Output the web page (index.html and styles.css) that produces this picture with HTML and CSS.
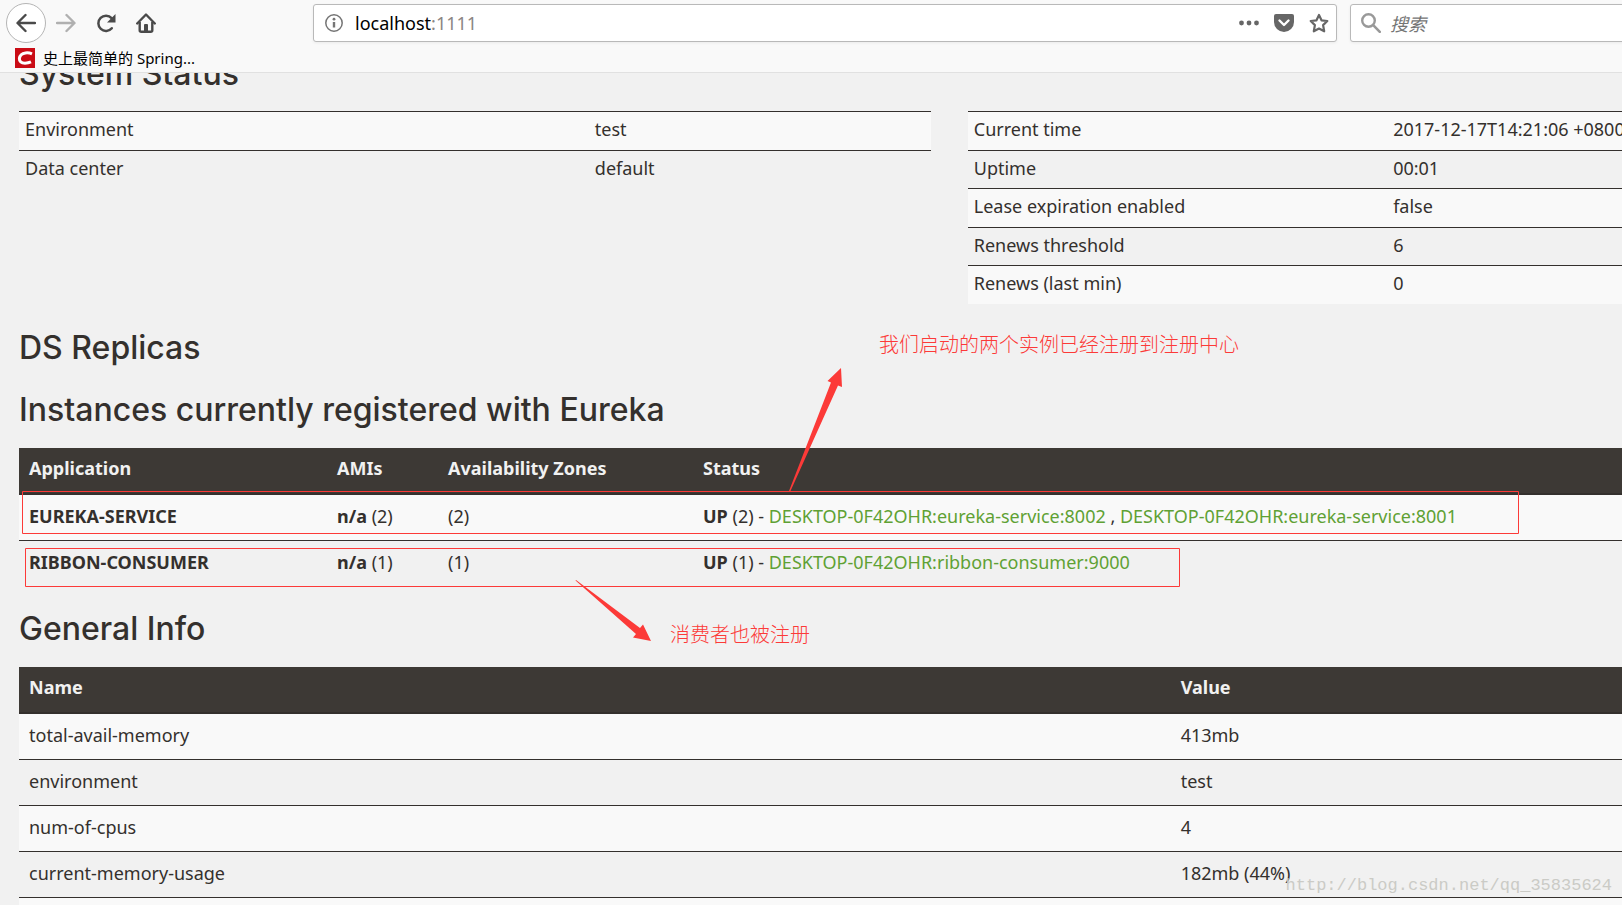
FILE: index.html
```html
<!DOCTYPE html>
<html lang="zh-CN">
<head>
<meta charset="utf-8">
<title>Eureka</title>
<link rel="stylesheet" href="styles.css">
</head>
<body>
<header class="chrome">
  <div class="toolbar">
    <nav class="nav">
      <button class="nav-btn back" aria-label="Back"><svg width="20" height="20" viewBox="0 0 20 20"><path d="M19 10H2M9.500 2L1.500 10l8 8" fill="none" stroke="#4a4a4a" stroke-width="2.400" stroke-linecap="round" stroke-linejoin="round"/></svg></button>
      <button class="nav-btn" aria-label="Forward"><svg width="20" height="20" viewBox="0 0 20 20"><path d="M1 10h17M10.500 2l8 8-8 8" fill="none" stroke="#b0b0b0" stroke-width="2.400" stroke-linecap="round" stroke-linejoin="round"/></svg></button>
      <button class="nav-btn" aria-label="Reload"><svg width="20" height="20" viewBox="0 0 20 20"><path d="M15.800 15.200A7.600 7.600 0 1 1 15.600 5.200" fill="none" stroke="#4a4a4a" stroke-width="2.500" stroke-linecap="round"/><path d="M19.500 1v8.500H11z" fill="#4a4a4a"/></svg></button>
      <button class="nav-btn" aria-label="Home"><svg width="20" height="20" viewBox="0 0 20 20"><path d="M1.200 10.500L10 1.500l8.800 9" fill="none" stroke="#4a4a4a" stroke-width="2.400" stroke-linecap="round" stroke-linejoin="round"/><path d="M3.700 9v8.200q0 1.500 1.500 1.500h9.600q1.500 0 1.500-1.500V9" fill="none" stroke="#4a4a4a" stroke-width="2.400"/><path d="M8 19v-7q0-1 1-1h2q1 0 1 1v7z" fill="#4a4a4a"/></svg></button>
    </nav>
    <div class="field url">
      <svg width="18" height="18" viewBox="0 0 18 18"><circle cx="9" cy="9" r="8.200" fill="none" stroke="#757575" stroke-width="1.500"/><path d="M9 8v5.500" stroke="#757575" stroke-width="2.400"/><circle cx="9" cy="5.200" r="1.400" fill="#757575"/></svg>
      <span class="address">localhost<span class="port">:1111</span></span>
      <button class="icon-btn" aria-label="Page actions"><svg width="20" height="20" viewBox="0 0 20 20"><g fill="#666"><circle cx="2.500" cy="10" r="2.400"/><circle cx="10" cy="10" r="2.400"/><circle cx="17.500" cy="10" r="2.400"/></g></svg></button>
      <button class="icon-btn" aria-label="Pocket"><svg width="20" height="20" viewBox="0 0 20 20"><path d="M2 1h16q2 0 2 2v6a10 10 0 0 1-20 0V3q0-2 2-2z" fill="#666"/><path d="M5.500 7.500L10 12l4.500-4.500" fill="none" stroke="#fff" stroke-width="2.400" stroke-linecap="round" stroke-linejoin="round"/></svg></button>
      <button class="icon-btn" aria-label="Bookmark"><svg width="20" height="20" viewBox="0 0 20 20"><path d="M10 2l2.500 5.300 5.800.7-4.200 4.100 1.100 6.200L10 15.500l-5.200 2.800 1.100-6.200L1.700 8l5.800-.7z" fill="none" stroke="#666" stroke-width="2.200" stroke-linejoin="round"/></svg></button>
    </div>
    <label class="field search">
      <svg width="20" height="20" viewBox="0 0 20 20"><circle cx="7.500" cy="7.500" r="6.300" fill="none" stroke="#999" stroke-width="2.400"/><path d="M12.200 12.200l6.600 6.600" stroke="#999" stroke-width="2.600" stroke-linecap="round"/></svg>
      <input class="search-input" type="text" placeholder="搜索" aria-label="搜索">
    </label>
  </div>
  <a class="bookmark" href="#"><svg width="20" height="20" viewBox="0 0 20 20"><path d="M0 0h20v20H0z" fill="#ca0c16"/><path d="M17 5.800Q14 4.500 10.500 4.900 5 5.600 4.400 10.500 4.200 15 10 15.200q3.200 0 6-1.300" fill="none" stroke="#fff" stroke-width="3"/></svg><span>史上最简单的 Spring...</span></a>
</header>

<main class="viewport">
  <div class="page">
    <h1 class="title clipped">System Status</h1>
    <div class="status">
      <table class="info env">
        <tr><td>Environment</td><td>test</td></tr>
        <tr><td>Data center</td><td>default</td></tr>
      </table>
      <table class="info time">
        <tr><td>Current time</td><td>2017-12-17T14:21:06 +0800</td></tr>
        <tr><td>Uptime</td><td>00:01</td></tr>
        <tr><td>Lease expiration enabled</td><td>false</td></tr>
        <tr><td>Renews threshold</td><td>6</td></tr>
        <tr><td>Renews (last min)</td><td>0</td></tr>
      </table>
    </div>
    <h1 class="title">DS Replicas</h1>
    <h1 class="title">Instances currently registered with Eureka</h1>
    <table class="grid instances">
      <thead><tr><th>Application</th><th>AMIs</th><th>Availability Zones</th><th>Status</th></tr></thead>
      <tbody>
        <tr><td><b>EUREKA-SERVICE</b></td><td><b>n/a</b> (2)</td><td>(2)</td><td><b>UP</b> (2) - <a href="#">DESKTOP-0F42OHR:eureka-service:8002</a> , <a href="#">DESKTOP-0F42OHR:eureka-service:8001</a></td></tr>
        <tr><td><b>RIBBON-CONSUMER</b></td><td><b>n/a</b> (1)</td><td>(1)</td><td><b>UP</b> (1) - <a href="#">DESKTOP-0F42OHR:ribbon-consumer:9000</a></td></tr>
      </tbody>
    </table>
    <h1 class="title">General Info</h1>
    <table class="grid general">
      <thead><tr><th>Name</th><th>Value</th></tr></thead>
      <tbody>
        <tr><td>total-avail-memory</td><td>413mb</td></tr>
        <tr><td>environment</td><td>test</td></tr>
        <tr><td>num-of-cpus</td><td>4</td></tr>
        <tr><td>current-memory-usage</td><td>182mb (44%)</td></tr>
        <tr><td></td><td></td></tr>
      </tbody>
    </table>
  </div>
</main>

<svg class="marks" width="1622" height="905" viewBox="0 0 1622 905" aria-hidden="true">
  <g fill="none" stroke="#fc3a38"><path d="M22.500 491.500h1496v42h-1496z"/><path d="M25.500 548.500h1154v38h-1154z"/></g>
  <g fill="#fc3a38"><path d="M841 368l-13.500 13 3.500 1.500L789 491h1.500L838 385.500l4 1.500z"/><path d="M651 641l-8-16.500-3 3.500L576 580l-.5.500L636 634l-3 3.500z"/></g>
</svg>
<p class="note note-instances">我们启动的两个实例已经注册到注册中心</p>
<p class="note note-consumer">消费者也被注册</p>
<p class="watermark">http://blog.csdn.net/qq_35835624</p>
</body>
</html>
```
FILE: styles.css
```css
* { box-sizing: border-box; }
body {
  margin: 0;
  height: 100vh;
  display: flex;
  flex-direction: column;
  position: relative;
  overflow: hidden;
  background: #f1f1f1;
  color: #34302d;
  font: 18px/26px "Noto Sans", "Noto Sans CJK SC", sans-serif;
}
button { border: 0; padding: 0; background: none; display: flex; align-items: center; justify-content: center; }
a { color: #5fa134; text-decoration: none; }
svg { flex: none; display: block; }

.chrome { flex: none; height: 73px; background: #f9f9f9; border-bottom: 1px solid #e1e1e1; }
.toolbar { display: flex; height: 46px; padding: 4px 0 4px 6px; }
.nav { display: flex; align-items: center; width: 307px; }
.nav-btn { width: 40px; height: 40px; }
.back { border: 1px solid #b5b5b5; border-radius: 50%; background: #fff; }
.field {
  display: flex;
  align-items: center;
  background: #fff;
  border: 1px solid #b9b9b9;
  border-radius: 3px;
  box-shadow: 0 1px 3px rgba(0, 0, 0, .06);
}
.url { flex: 1; padding: 0 7px 0 11px; }
.address { flex: 1; margin-left: 12px; color: #000; }
.port { color: #8b8583; }
.icon-btn { width: 20px; height: 20px; margin-left: 15px; }
.search { width: 284px; margin: 0 -12px 0 13px; padding-left: 10px; }
.search-input { flex: 1; min-width: 0; margin-left: 9px; padding: 0; border: 0; outline: 0; background: none; font: italic 18px "Noto Sans CJK SC", sans-serif; }
.search-input::placeholder { color: #757575; opacity: 1; }
.bookmark { display: inline-flex; align-items: center; height: 24px; margin-left: 15px; gap: 8px; color: #000; font-size: 15px; line-height: 24px; }

.viewport { flex: 1; min-height: 0; overflow: hidden; }
.page { width: calc(116% - 2px); padding-left: 19px; }
.title { margin: 0; padding-top: 14px; font: 500 32px/32px Inter, sans-serif; height: 62px; }
.title.clipped { margin-top: -15px; padding: 0; height: 53px; }
.title + .grid { margin-top: 6px; }
.grid + .title { margin-top: 13px; }
table { width: 100%; border-collapse: separate; border-spacing: 0; table-layout: fixed; }
th { text-align: left; font-weight: 700; }
td, th { vertical-align: top; white-space: nowrap; }

.status { display: grid; grid-template-columns: 1fr 1fr; gap: 37px; align-items: start; height: 207px; }
.info td { padding: 4px 6px 7px; border-top: 1px solid #34302d; }
.info tr:nth-child(odd) td { background: #f9f9f9; padding-bottom: 8px; }
.env td:first-child { width: 62.5%; }
.time td:first-child { width: 46%; }

.grid th { padding: 7px 10px 12px; background: #3d3935; color: #f1f1f1; border-bottom: 2px solid #34302d; }
.grid td { height: 45px; padding: 8px 10px 11px; }
.grid tr:nth-child(odd) td { background: #f9f9f9; }
.grid tr + tr td { height: 46px; border-top: 1px solid #34302d; }
.instances th:nth-child(1) { width: 308px; }
.instances th:nth-child(2) { width: 111px; }
.instances th:nth-child(3) { width: 255px; }
.general th:first-child { width: 61.9%; }

.marks { position: absolute; left: 0; top: 0; pointer-events: none; }
.note { position: absolute; margin: 0; color: #fc3a38; font: 300 20px/20px "Noto Sans CJK SC", sans-serif; white-space: nowrap; }
.note-instances { left: 879px; top: 334px; }
.note-consumer { left: 670px; top: 624px; }
.watermark { position: absolute; right: 10px; bottom: 7px; margin: 0; color: #cbcbc6; font: 17px/24px "Liberation Mono", monospace; }
```
